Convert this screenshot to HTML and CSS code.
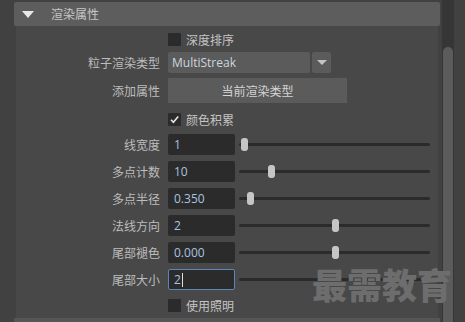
FILE: index.html
```
<!DOCTYPE html>
<html>
<head>
<meta charset="utf-8">
<link rel="stylesheet" href="styles.css">
</head>
<body>
<div class="app">
  <div class="gutter"></div>
  <div class="main">
    <div class="header">
      <span class="tri"></span>
      <span class="htitle">渲染属性</span>
    </div>
    <div class="panel">
      <div class="row r-check1">
        <span class="label"></span>
        <span class="cb"></span><span class="cblabel">深度排序</span>
      </div>
      <div class="row r-drop">
        <span class="label">粒子渲染类型</span>
        <span class="drop">MultiStreak</span>
        <span class="dropbtn"><span class="dtri"></span></span>
      </div>
      <div class="row r-btn">
        <span class="label">添加属性</span>
        <span class="btn">当前渲染类型</span>
      </div>
      <div class="row r-check2">
        <span class="label"></span>
        <span class="cb checked"><svg width="13" height="13" viewBox="0 0 13 13"><path d="M3 6.8 L5.4 9.3 L10.2 3.4" fill="none" stroke="#e6e6e6" stroke-width="1.6"/></svg></span><span class="cblabel">颜色积累</span>
      </div>
      <div class="fields">
        <div class="row frow">
          <span class="label">线宽度</span>
          <span class="field">1</span>
          <span class="slider"><span class="track"></span><span class="handle" style="left:2px"></span></span>
        </div>
        <div class="row frow">
          <span class="label">多点计数</span>
          <span class="field">10</span>
          <span class="slider"><span class="track"></span><span class="handle" style="left:29px"></span></span>
        </div>
        <div class="row frow">
          <span class="label">多点半径</span>
          <span class="field">0.350</span>
          <span class="slider"><span class="track"></span><span class="handle" style="left:8px"></span></span>
        </div>
        <div class="row frow">
          <span class="label">法线方向</span>
          <span class="field">2</span>
          <span class="slider"><span class="track"></span><span class="handle" style="left:93px"></span></span>
        </div>
        <div class="row frow">
          <span class="label">尾部褪色</span>
          <span class="field">0.000</span>
          <span class="slider"><span class="track"></span><span class="handle" style="left:93px"></span></span>
        </div>
        <div class="row frow">
          <span class="label">尾部大小</span>
          <span class="field active">2<span class="caret"></span></span>
          <span class="slider"><span class="track"></span></span>
        </div>
      </div>
      <div class="row r-check3">
        <span class="label"></span>
        <span class="cb"></span><span class="cblabel">使用照明</span>
      </div>
      <div class="watermark">最需教育</div>
    </div>
    <div class="nexthdr"></div>
  </div>
  <div class="gap"></div>
  <div class="scroll"><div class="thumb"></div></div>
</div>
</body>
</html>
```

FILE: styles.css
```
html, body {
  margin: 0;
  padding: 0;
  background: #414141;
  font-family: "Noto Sans CJK SC", "Open Sans", sans-serif;
  font-size: 12px;
  color: #bdbdbd;
  overflow: hidden;
}
.app {
  display: flex;
  width: 465px;
  height: 322px;
}
.gutter {
  width: 14px;
  flex: none;
}
.main {
  width: 426px;
  flex: none;
  display: flex;
  flex-direction: column;
}
.header {
  margin-top: 2px;
  height: 24px;
  background: #5d5d5d;
  border-radius: 2px;
  display: flex;
  align-items: center;
  flex: none;
}
.tri {
  width: 0;
  height: 0;
  margin-left: 8px;
  border-left: 6px solid transparent;
  border-right: 6px solid transparent;
  border-top: 7px solid #e8e8e8;
}
.htitle {
  margin-left: 17px;
  color: #c8c8c8;
  line-height: 24px;
}
.panel {
  position: relative;
  z-index: 2;
  margin: 0 2px;
  height: 292px;
  background: #484848;
  padding-top: 7px;
  box-sizing: border-box;
  flex: none;
}
.nexthdr {
  margin-top: 0;
  height: 4px;
  background: #555555;
  flex: none;
}
.row {
  display: flex;
  align-items: center;
}
.label {
  width: 144px;
  flex: none;
  text-align: right;
  margin-right: 8px;
  white-space: nowrap;
  line-height: 16px;
}
.r-check1 { height: 13px; }
.r-drop { height: 21px; margin-top: 6px; }
.r-btn { height: 25px; margin-top: 5px; }
.r-check2 { height: 13px; margin-top: 10px; }
.fields {
  margin-top: 8px;
  display: flex;
  flex-direction: column;
  gap: 6px;
}
.r-check3 { height: 13px; margin-top: 9px; }
.cb {
  width: 13px;
  height: 13px;
  background: #2b2b2b;
  border-radius: 1px;
  flex: none;
  display: block;
}
.cb svg { display: block; }
.cblabel {
  margin-left: 5px;
  line-height: 13px;
  color: #c4c4c4;
}
.drop {
  width: 142px;
  height: 21px;
  background: #5b5b5b;
  border-radius: 2px;
  box-sizing: border-box;
  padding-left: 4px;
  font-family: "Open Sans", sans-serif;
  font-size: 12px;
  line-height: 21px;
  color: #cdd6df;
  flex: none;
}
.dropbtn {
  width: 19px;
  height: 21px;
  margin-left: 2px;
  background: #5b5b5b;
  border-radius: 2px;
  display: flex;
  align-items: center;
  justify-content: center;
  flex: none;
}
.dtri {
  width: 0;
  height: 0;
  border-left: 5px solid transparent;
  border-right: 5px solid transparent;
  border-top: 5px solid #c4c4c4;
}
.btn {
  width: 179px;
  height: 25px;
  background: #5b5b5b;
  text-align: center;
  line-height: 25px;
  color: #d4d4d4;
  flex: none;
}
.frow { height: 21px; }
.field {
  width: 67px;
  height: 21px;
  background: #2b2b2b;
  border-radius: 2px;
  box-sizing: border-box;
  padding-left: 6px;
  font-family: "Open Sans", sans-serif;
  font-size: 12px;
  line-height: 21px;
  color: #a9c4e0;
  flex: none;
  display: flex;
  align-items: center;
}
.field.active {
  border: 1px solid #5a87b3;
  padding-left: 5px;
}
.caret {
  width: 1px;
  height: 14px;
  background: #e0e0e0;
  margin-left: 1px;
}
.slider {
  position: relative;
  margin-left: 4px;
  width: 191px;
  height: 21px;
  flex: none;
}
.track {
  position: absolute;
  left: 0;
  right: 0;
  top: 9px;
  height: 3px;
  border-radius: 2px;
  background: #2b2b2b;
}
.handle {
  position: absolute;
  top: 4px;
  width: 7px;
  height: 13px;
  border-radius: 3px;
  background: #c6c6c6;
}
.watermark {
  position: absolute;
  z-index: 5;
  left: 296px;
  top: 238px;
  font-size: 35px;
  font-weight: 900;
  color: #6d6d6d;
  letter-spacing: 0px;
  line-height: 40px;
  white-space: nowrap;
}
.gap {
  width: 2px;
  flex: none;
}
.scroll {
  width: 12px;
  background: #363636;
  flex: none;
  position: relative;
  z-index: 1;
}
.thumb {
  position: absolute;
  left: 1px;
  right: 1px;
  top: 47px;
  bottom: 0;
  background: #5b5b5b;
  border-radius: 5px 5px 0 0;
}
```
